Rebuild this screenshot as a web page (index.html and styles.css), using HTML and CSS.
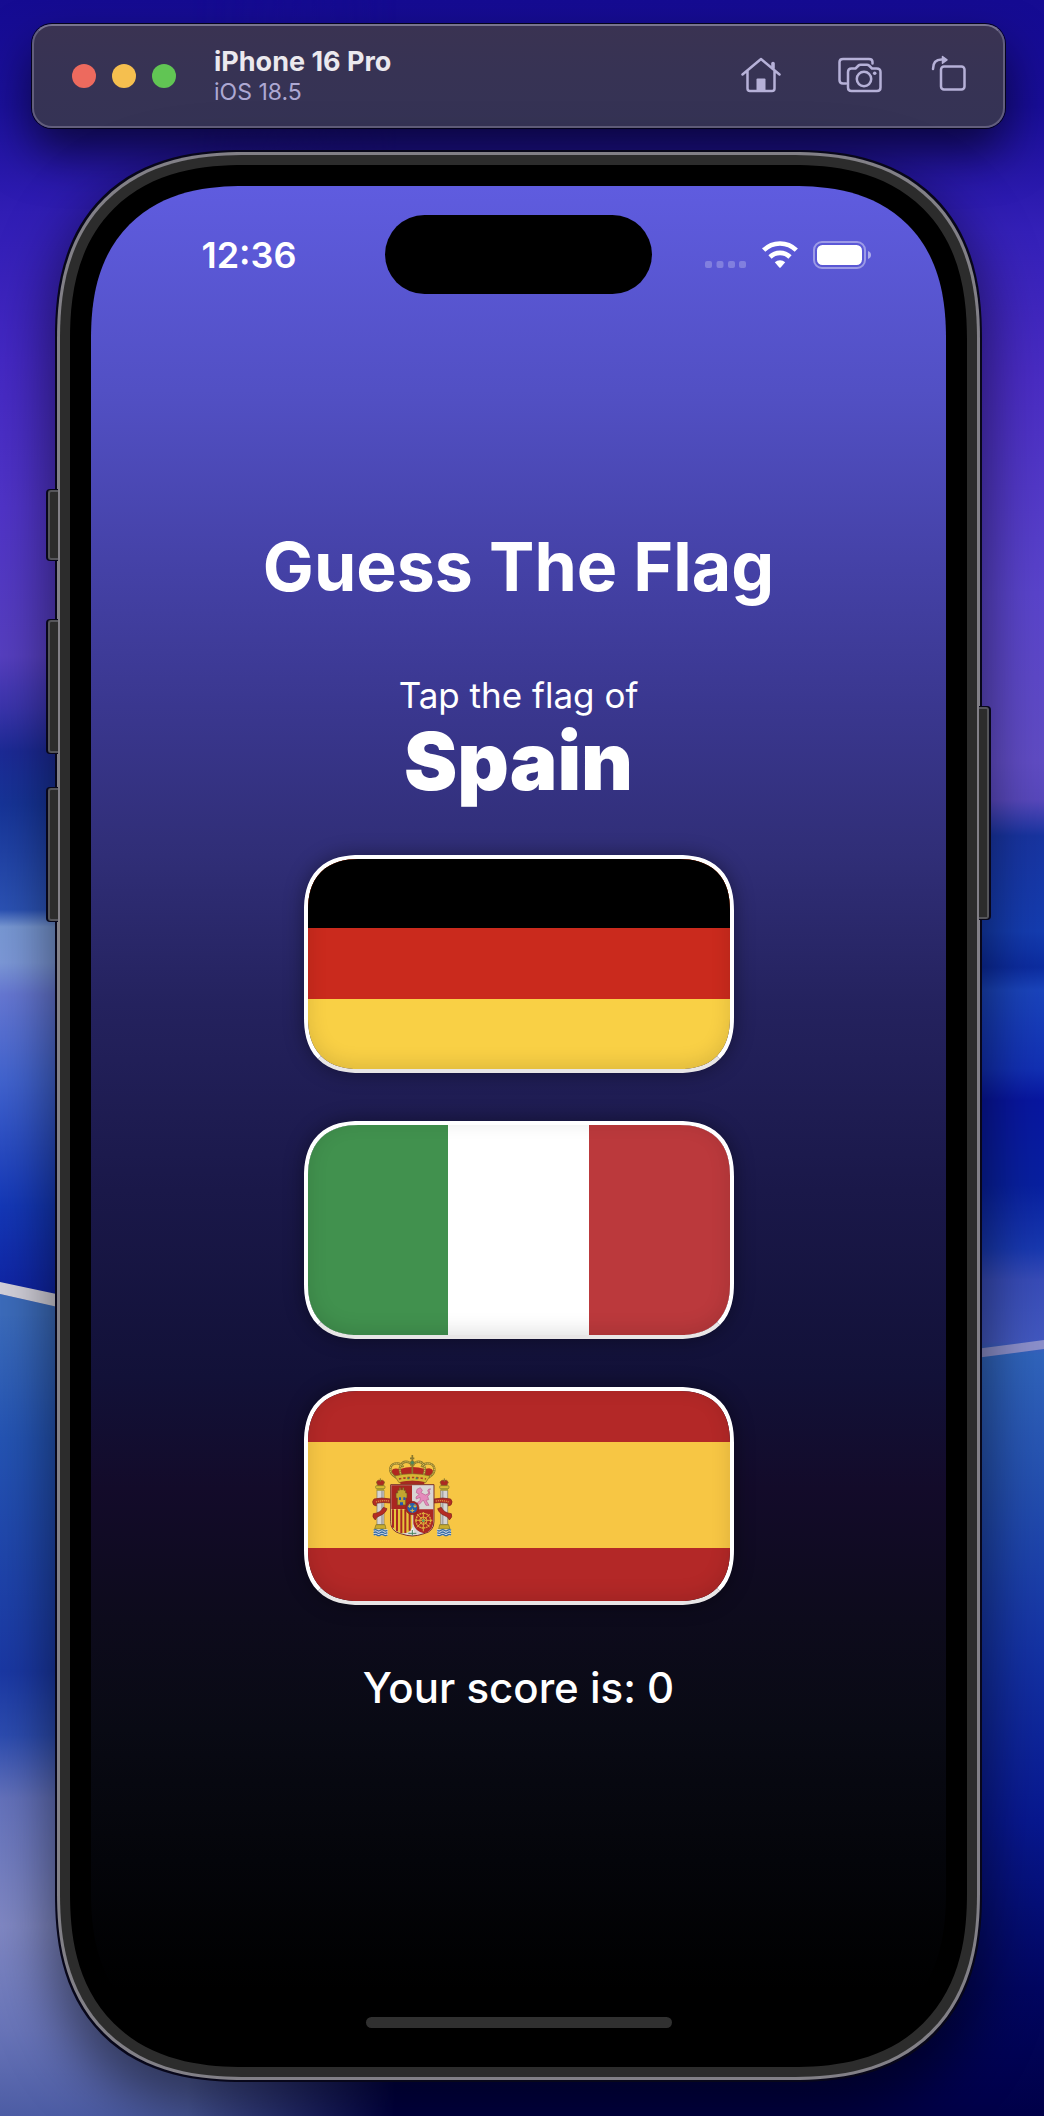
FILE: index.html
```html
<!DOCTYPE html>
<html lang="en">
<head>
<meta charset="utf-8">
<meta name="viewport" content="width=device-width, initial-scale=1">
<title>Guess The Flag</title>
<link rel="stylesheet" href="styles.css">
</head>
<body>
<svg class="wallpaper" viewBox="0 0 1044 2116" preserveAspectRatio="none" aria-hidden="true">
  <defs>
    <linearGradient id="wall-left" x1="0" y1="0" x2="0" y2="1">
      <stop offset="0" stop-color="#150b92"/><stop offset=".05" stop-color="#1b109c"/>
      <stop offset=".1" stop-color="#301db4"/><stop offset=".17" stop-color="#4428c4"/>
      <stop offset=".24" stop-color="#5034c8"/><stop offset=".31" stop-color="#563fc0"/>
      <stop offset=".335" stop-color="#3a34ac"/><stop offset=".355" stop-color="#1c2a96"/>
      <stop offset=".38" stop-color="#163498"/><stop offset=".43" stop-color="#2b52b4"/>
      <stop offset=".438" stop-color="#7898d4"/><stop offset=".455" stop-color="#7c98d8"/>
      <stop offset=".47" stop-color="#6678d4"/><stop offset=".51" stop-color="#4264d0"/>
      <stop offset=".57" stop-color="#1438b8"/><stop offset=".611" stop-color="#0f24a4"/>
      <stop offset=".62" stop-color="#3c6cbc"/><stop offset=".68" stop-color="#2454b4"/>
      <stop offset=".79" stop-color="#1a38a4"/><stop offset=".82" stop-color="#2c4cb0"/>
      <stop offset=".85" stop-color="#6472bc"/><stop offset=".91" stop-color="#8088c4"/>
      <stop offset=".96" stop-color="#6874b8"/><stop offset="1" stop-color="#4c5ca4"/>
    </linearGradient>
    <linearGradient id="wall-right" x1="0" y1="0" x2="0" y2="1">
      <stop offset="0" stop-color="#150b92"/><stop offset=".05" stop-color="#180d98"/>
      <stop offset=".11" stop-color="#3420b8"/><stop offset=".18" stop-color="#4a2cc4"/>
      <stop offset=".28" stop-color="#5a44cc"/><stop offset=".36" stop-color="#604cc4"/>
      <stop offset=".378" stop-color="#5848bc"/><stop offset=".395" stop-color="#1834a0"/>
      <stop offset=".44" stop-color="#143cb0"/><stop offset=".457" stop-color="#0c2ca0"/>
      <stop offset=".468" stop-color="#1a44bc"/><stop offset=".505" stop-color="#1230b4"/>
      <stop offset=".52" stop-color="#0816a0"/><stop offset=".56" stop-color="#0820a0"/>
      <stop offset=".59" stop-color="#1838b0"/><stop offset=".605" stop-color="#384cb8"/>
      <stop offset=".634" stop-color="#4258c0"/><stop offset=".64" stop-color="#3064bc"/>
      <stop offset=".7" stop-color="#2450b0"/><stop offset=".78" stop-color="#1432a4"/>
      <stop offset=".86" stop-color="#081890"/><stop offset=".94" stop-color="#020660"/>
      <stop offset="1" stop-color="#000048"/>
    </linearGradient>
    <linearGradient id="wall-fade">
      <stop offset=".18" stop-color="#fff"/><stop offset=".38" stop-color="#000"/>
    </linearGradient>
    <mask id="left-part"><rect width="1044" height="2116" fill="url(#wall-fade)"/></mask>
  </defs>
  <rect width="1044" height="2116" fill="url(#wall-right)"/>
  <g mask="url(#left-part)">
    <rect width="1044" height="2116" fill="url(#wall-left)"/>
    <path d="M0 1294L80 1312V1316H0Z" fill="#3c6cbc"/>
    <path d="M0 1282L80 1299V1312L0 1294Z" fill="#d4d2dc"/>
  </g>
  <path d="M960 1351L1044 1340V1349L960 1360Z" fill="#8c90cc"/>
</svg>

<main class="desktop">
  <header class="toolbar">
    <div class="lights">
      <button class="light light-close" aria-label="Close"></button>
      <button class="light light-minimize" aria-label="Minimize"></button>
      <button class="light light-zoom" aria-label="Zoom"></button>
    </div>
    <div class="device">
      <strong class="device-name">iPhone 16 Pro</strong>
      <span class="device-os">iOS 18.5</span>
    </div>
    <div class="tools">
      <button class="tool" aria-label="Home">
        <svg width="54" height="44" viewBox="0 0 54 44" fill="none" stroke="currentColor" stroke-width="2.5" stroke-linecap="round" stroke-linejoin="round"><path d="M3.500 20.500L22 5L40.500 20.500M8.500 17V34.500Q8.500 37 11 37H33Q35.500 37 35.500 34.500V17"/><path d="M17.500 25.500Q17.500 24.500 18.500 24.500H25.500Q26.500 24.500 26.500 25.500V37H17.500Z" fill="currentColor" stroke="none"/><path d="M34 9.500V14" stroke-width="3.600"/></svg>
      </button>
      <button class="tool" aria-label="Screenshot">
        <svg width="44" height="44" viewBox="0 0 44 44" fill="none" stroke="currentColor" stroke-width="2.500" stroke-linecap="round" stroke-linejoin="round"><path d="M8 29.500H5Q1.500 29.500 1.500 26V8Q1.500 5 5 5H31Q34.500 5 34.500 8V9.500"/><path d="M10 18Q10 14.500 13.500 14.500H17.500L20.500 11.500Q21.200 10.800 22.500 10.800H29Q30.200 10.800 31 11.500L34 14.500H38.500Q42.500 14.500 42.500 18V33.500Q42.500 37 39 37H13.500Q10 37 10 33.500Z"/><circle cx="26" cy="25" r="7.200"/><circle cx="36.700" cy="19.300" r="1.800" fill="currentColor" stroke="none"/></svg>
      </button>
      <button class="tool" aria-label="Rotate">
        <svg width="44" height="44" viewBox="0 0 44 44" fill="none" stroke="currentColor" stroke-width="2.500" stroke-linecap="round" stroke-linejoin="round"><rect x="14" y="12.500" width="23.500" height="23" rx="3"/><path d="M6 15C6 9 9 5.500 14.500 5.500"/><path d="M15.500 2.500L20 5.800L15.500 9.200Z" fill="currentColor" stroke-width="1.500"/></svg>
      </button>
    </div>
  </header>

  <section class="phone">
    <i class="side-key key-action"></i>
    <i class="side-key key-up"></i>
    <i class="side-key key-down"></i>
    <i class="side-key key-power"></i>
    <div class="bezel">
      <div class="screen">
        <div class="status">
          <time class="clock">12:36</time>
          <span class="island"></span>
          <div class="indicators">
            <svg width="42" height="28" viewBox="0 0 42 28" fill="#fff" fill-opacity=".24" aria-label="No signal"><rect x="0" y="20" width="7" height="7" rx="2"/><rect x="11.500" y="20" width="7" height="7" rx="2"/><rect x="23" y="20" width="7" height="7" rx="2"/><rect x="34" y="20" width="7" height="7" rx="2"/></svg>
            <svg width="36" height="28" viewBox="0 0 36 28" fill="none" stroke="#fff" stroke-width="4.600" aria-label="Wi-Fi"><path d="M1.700 9.200A23.200 23.200 0 0 1 34.300 9.200"/><path d="M8 16A14.200 14.200 0 0 1 28 16"/><path d="M12.800 21.200A7.600 7.600 0 0 1 23.200 21.200L18.700 26.500Q18 27.200 17.300 26.500Z" fill="#fff" stroke="none"/></svg>
            <svg width="60" height="28" viewBox="0 0 60 28" aria-label="Battery full"><rect x="1" y="1" width="51" height="26" rx="8" fill="none" stroke="#fff" stroke-opacity=".4" stroke-width="2"/><rect x="4" y="4" width="45" height="20" rx="5.500" fill="#fff"/><path d="M55 10Q58 11.200 58 14T55 18Z" fill="#fff" fill-opacity=".5"/></svg>
          </div>
        </div>

        <div class="game">
          <h1 class="title">Guess The Flag</h1>
          <p class="prompt">Tap the flag of</p>
          <h2 class="country">Spain</h2>
          <div class="flags">
            <button class="flag" aria-label="Germany"><svg viewBox="0 0 422 210" preserveAspectRatio="none"><rect width="422" height="210" fill="#f9d045"/><rect width="422" height="140" fill="#ca2a1d"/><rect width="422" height="69" fill="#000"/></svg></button>
            <button class="flag" aria-label="Italy"><svg viewBox="0 0 422 210" preserveAspectRatio="none"><rect width="422" height="210" fill="#fff"/><rect width="140" height="210" fill="#41914e"/><rect x="281" width="141" height="210" fill="#bb393c"/></svg></button>
            <button class="flag" aria-label="Spain"><svg viewBox="0 0 422 210" preserveAspectRatio="none">
              <rect width="422" height="210" fill="#b32827"/><rect y="51" width="422" height="106" fill="#f7c644"/>
              <g transform="translate(52 49) scale(.3333)" stroke-linejoin="round">
                <g id="pillar">
                  <rect x="51" y="150" width="21" height="104" fill="#d6d4d2" stroke="#77746c" stroke-width="2"/><path d="M66 151V253" stroke="#a5a4a4" stroke-width="5"/>
                  <rect x="47" y="137" width="28" height="9" rx="3" fill="#d9bd33" stroke="#77702a" stroke-width="2"/><rect x="50" y="146" width="22" height="6" fill="#a89a2c"/>
                  <path d="M49 126Q54 118 61 121Q68 118 74 126L70 136H53Z" fill="#ac2b22" stroke="#7f6824" stroke-width="2"/><path d="M61 115V125" stroke="#8a742c" stroke-width="3"/>
                  <path d="M48 254H75L78 267H44Z" fill="#c9ac2e" stroke="#77702a" stroke-width="2"/>
                  <rect x="41" y="268" width="42" height="18" fill="#d7dde3"/>
                  <path d="M41 271q5-4 10 0t10 0 10 0 11 0M41 278q5-4 10 0t10 0 10 0 11 0M41 285q5-4 10 0t10 0 10 0 11 0" fill="none" stroke="#356ba5" stroke-width="4"/>
                  <path d="M92 177Q64 171 42 177Q34 185 41 195L49 198V190Q68 185 92 189ZM40 221Q62 219 70 202L81 206Q77 220 60 227Q48 231 46 240Q35 231 40 221Z" fill="#b52c23" stroke="#7c241d" stroke-width="2"/>
                  <path d="M48 186Q65 180 87 183" fill="none" stroke="#d99b47" stroke-width="4" stroke-dasharray="3 3"/>
                </g>
                <use href="#pillar" transform="translate(314 0) scale(-1 1)"/>
                <path d="M92 134H222V245Q222 274 192 281Q172 288 157 288Q142 288 122 281Q92 274 92 245Z" fill="#d9d5d4" stroke="#76312a" stroke-width="3"/>
                <path d="M94 136H156V207H94Z" fill="#a92520"/>
                <path d="M94 208H157V264Q150 281 125 280Q94 273 94 246Z" fill="#e6c43a"/>
                <path d="M99 208V263M111 208V274M124 208V279M136 208V279M149 208V272" stroke="#a92822" stroke-width="6"/>
                <path d="M160 208H220V246Q217 275 192 280Q164 274 160 250Z" fill="#ac2823"/>
                <path d="M190 216V274M165 241H217M171 222L209 262M209 222L171 262" stroke="#e0b53d" stroke-width="3"/>
                <circle cx="190" cy="242" r="22" fill="none" stroke="#e0b53d" stroke-width="4" stroke-dasharray="5 2"/><circle cx="190" cy="242" r="11" fill="none" stroke="#e0b53d" stroke-width="3"/><circle cx="190" cy="242" r="4" fill="#5b9c60"/>
                <path d="M112 195V174H108V159H113V151H118V143H122V149H128V143H132V151H137V159H141V174H137V195Z" fill="#c2a631" stroke="#6e5321" stroke-width="2"/><path d="M117 172h6v8h-6zM130 172h6v8h-6zM120 187h9v9h-9z" fill="#2456b4"/>
                <path d="M171 148L181 143L187 151L183 158L196 165L207 160L203 152Q205 145 212 147L207 151Q214 163 203 169L206 179L198 181L207 196H198L190 180L178 193L170 190L181 181L180 172L169 177L168 171L178 163L169 158Z" fill="#e48abb" stroke="#b95d8d" stroke-width="2"/>
                <path d="M157 261L164 278L157 286L150 278Z" fill="#eee"/><path d="M145 280H169M157 270V287" stroke="#47815d" stroke-width="3"/>
                <circle cx="157" cy="204" r="20" fill="#a72422" stroke="#7a2720" stroke-width="2"/><circle cx="157" cy="204" r="15" fill="#2461ad"/><path d="M149 193v10M144 198q5 4 10 0M165 193v10M160 198q5 4 10 0M157 206v11M151 211q6 4 12 0" stroke="#e0bd40" stroke-width="3" fill="none"/>
                <path d="M96 92Q98 82 120 87Q156 75 195 87Q215 80 219 92Q220 105 205 114H110Q93 105 96 92Z" fill="#b22820"/>
                <path d="M109 113C79 95 90 68 113 70Q127 72 129 82M126 111C111 82 125 61 144 66Q154 69 156 79M205 113C235 95 224 68 201 70Q187 72 185 82M188 111C203 82 189 61 170 66Q160 69 158 79" fill="none" stroke="#88762c" stroke-width="7"/>
                <path d="M109 113C79 95 90 68 113 70Q127 72 129 82M126 111C111 82 125 61 144 66Q154 69 156 79M205 113C235 95 224 68 201 70Q187 72 185 82M188 111C203 82 189 61 170 66Q160 69 158 79" fill="none" stroke="#e0c350" stroke-width="3" stroke-dasharray="4 2"/>
                <path d="M157 72V110M150 55H163M157 45V66" stroke="#8a792e" stroke-width="5"/><circle cx="157" cy="68" r="6" fill="#4c8960" stroke="#8a792e" stroke-width="2"/>
                <path d="M104 108Q157 94 210 108L197 128Q157 119 117 128Z" fill="#d7b735" stroke="#7f6824" stroke-width="2"/><path d="M117 117Q157 108 198 117" fill="none" stroke="#b43723" stroke-width="5" stroke-dasharray="7 6"/><path d="M121 126Q157 118 193 126V133H121Z" fill="#a52a20"/><path d="M142 115h6M167 115h6" stroke="#438659" stroke-width="5"/>
              </g>
            </svg></button>
          </div>
          <p class="score">Your score is: 0</p>
        </div>
        <div class="home-bar"></div>
      </div>
    </div>
  </section>
</main>
</body>
</html>
```
FILE: styles.css
```css
* {
  box-sizing: border-box;
}

body {
  position: relative;
  margin: 0;
  background: #000048;
  color: #fff;
  font-family: Inter, "Liberation Sans", sans-serif;
}

h1, h2, p {
  margin: 0;
}

button {
  padding: 0;
  border: 0;
  background: none;
  color: inherit;
  cursor: pointer;
}

svg {
  display: block;
}

.wallpaper {
  position: absolute;
  inset: 0;
  width: 100%;
  height: 100%;
}

.desktop {
  position: relative;
  display: flex;
  flex-direction: column;
  gap: 24px;
  padding: 24px 39px 36px 32px;
}

/* Simulator window bar */
.toolbar {
  display: flex;
  align-items: center;
  height: 104px;
  padding: 0 32px 0 38px;
  border: 2px solid #625e7c;
  border-top-color: #78748e;
  border-radius: 20px;
  background: linear-gradient(#3a3352, #373354 45%, #353355);
  box-shadow: 0 0 0 1px #04031c, 0 24px 48px rgba(0, 0, 0, .6);
}

.lights {
  display: flex;
  gap: 16px;
}

.light {
  width: 24px;
  height: 24px;
  border-radius: 50%;
}

.light-close { background: #ed6a5e; }
.light-minimize { background: #f5bf4f; }
.light-zoom { background: #61c554; }

.device {
  display: flex;
  flex-direction: column;
  margin-left: 38px;
}

.device-name {
  color: #ebe9ee;
  font-size: 27px;
  font-weight: 700;
  line-height: 32px;
}

.device-os {
  color: #ada8d2;
  font-size: 23px;
  line-height: 28px;
}

.tools {
  display: flex;
  gap: 45px;
  margin-left: auto;
  color: #b6b1d8;
}

/* Phone hardware */
.phone {
  position: relative;
  margin: 0 25px;
  padding: 10px;
  border: 3px solid #828087;
  border-radius: 162px;
  background: #2c2c2c;
  box-shadow: 0 0 0 2px #08071a, 0 24px 56px 8px rgba(0, 0, 0, .5);
}

.bezel {
  padding: 21px;
  border-radius: 150px;
  background: #000;
}

.side-key {
  position: absolute;
  left: -12px;
  width: 10px;
  border: 2px solid #55555a;
  border-right: 0;
  border-radius: 3px 0 0 3px;
  background: #2c2c2c;
  box-shadow: -1px 0 0 1px #08071a;
}

.key-action { top: 335px; height: 70px; }
.key-up { top: 465px; height: 133px; }
.key-down { top: 633px; height: 133px; }

.key-power {
  top: 552px;
  right: -12px;
  left: auto;
  height: 212px;
  border-right: 2px solid #55555a;
  border-left: 0;
  border-radius: 0 3px 3px 0;
  box-shadow: 1px 0 0 1px #08071a;
}

/* App screen */
.screen {
  display: flex;
  flex-direction: column;
  align-items: center;
  padding: 29px 0 18px;
  border-radius: 132px;
  background: linear-gradient(
    #5f5cdf 0%,
    #5250c4 11%,
    #4542a8 20%,
    #3a378f 28%,
    #302e77 36%,
    #24225e 44%,
    #1a1849 54%,
    #121138 64%,
    #130b2a 70%,
    #0d0b1c 77%,
    #090a14 83%,
    #04050a 90%,
    #000 97%
  );
}

.status {
  display: grid;
  grid-template-columns: 1fr 267px 1fr;
  align-items: center;
  align-self: stretch;
}

.clock {
  padding-left: 22px;
  font-size: 36px;
  font-weight: 600;
  line-height: 44px;
  text-align: center;
}

.island {
  height: 79px;
  border-radius: 40px;
  background: #000;
}

.indicators {
  display: flex;
  justify-content: center;
  gap: 15px;
  padding-right: 20px;
}

.game {
  display: flex;
  flex-direction: column;
  align-items: center;
  align-self: stretch;
  padding: 228px 24px 305px;
  text-align: center;
}

.title {
  font-size: 68px;
  font-weight: 700;
  line-height: 88px;
}

.prompt {
  margin-top: 63px;
  font-size: 35px;
  line-height: 44px;
}

.country {
  font-size: 80px;
  font-weight: 900;
  line-height: 88px;
}

.flags {
  display: flex;
  flex-direction: column;
  align-items: center;
  gap: 48px;
  align-self: stretch;
  margin-top: 50px;
}

.flag {
  position: relative;
  width: 100%;
  max-width: 430px;
  height: 218px;
  overflow: hidden;
  border: 4px solid #fff;
  border-bottom-color: #e8e6e6;
  border-radius: 48px;
  box-shadow: 0 0 20px rgba(0, 0, 0, .4);
}

.flag::after {
  position: absolute;
  inset: 0;
  border-radius: 44px;
  box-shadow: inset 0 -4px 20px rgba(0, 0, 0, .12);
  content: "";
}

.flag svg {
  width: 100%;
  height: 100%;
}

.score {
  margin-top: 59px;
  font-size: 42px;
  font-weight: 500;
  line-height: 48px;
}

.home-bar {
  width: 306px;
  height: 11px;
  border-radius: 6px;
  background: #303030;
}

/* Continuous corners where the browser can draw them */
@supports (corner-shape: superellipse(1.27)) {
  .phone { border-radius: 188px; corner-shape: superellipse(1.27); }
  .bezel { border-radius: 175px; corner-shape: superellipse(1.27); }
  .screen { border-radius: 154px; corner-shape: superellipse(1.27); }
  .flag { border-radius: 56px; corner-shape: superellipse(1.27); }
  .flag::after { border-radius: 52px; corner-shape: superellipse(1.27); }
}
```
